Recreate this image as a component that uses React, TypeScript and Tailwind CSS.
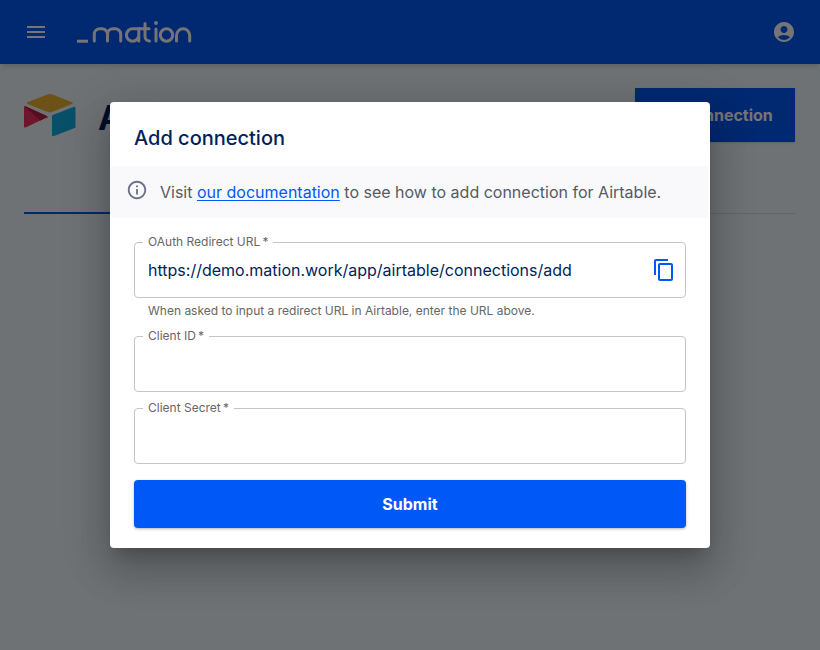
import { MdAccountCircle, MdMenu, MdOutlineContentCopy, MdOutlineInfo } from "react-icons/md";

const MationLogo = () => (
  <svg width="116" height="24" viewBox="0 0 116 24" fill="none" stroke="#fff" strokeWidth="3" strokeLinecap="round">
    <path d="M1 21.200h11" strokeLinecap="butt" />
    <path d="M18.300 21v-6.700a5.500 5.500 0 0 1 5.500-5.500h2.200a5.500 5.500 0 0 1 5.500 5.500V21M31.500 14.300a5.500 5.500 0 0 1 5.500-5.500h2.200a5.500 5.500 0 0 1 5.500 5.500V21" />
    <path d="M62.800 15a6.200 6.200 0 1 1-6.200-6.200h6.200V21" />
    <path d="M69 3.500v13a4.500 4.500 0 0 0 4.500 4.500M62.800 8.800H73" />
    <path d="M80 9v12" />
    <circle cx="80" cy="3" r="1.900" fill="#fff" stroke="none" />
    <circle cx="90.500" cy="15" r="6.200" />
    <path d="M100.500 21v-5.600a6.600 6.600 0 0 1 13.200 0V21" />
  </svg>
);

const AirtableLogo = () => (
  <svg width="52" height="44" viewBox="0 0 52 44">
    <path d="M23 2.500 3.500 10.300c-1 .4-1 1.300 0 1.700L23 19.800c1.800.7 3.800.7 5.500 0L48 12c1-.4 1-1.300 0-1.700L28.500 2.500c-1.800-.7-3.700-.7-5.500 0Z" fill="#eeb030" />
    <path d="M28 24.200v19c0 .8.800 1.300 1.500 1L50.700 36c.5-.2.800-.7.800-1.100V15.800c0-.8-.8-1.300-1.500-1L28.800 23.100c-.5.200-.8.600-.8 1.100Z" fill="#12aee6" />
    <path d="M23 25.200 1.600 35.500c-.7.400-1.600-.1-1.600-.9V15.200c0-.3.100-.6.400-.8.100-.100.300-.2.500-.2.200 0 .400 0 .600.100l21.300 9.600c.8.300.8 1.800.2 2.200Z" fill="#f0305f" />
    <path d="m23 25.200-6.600 3.300L.4 14.400c.1-.1.300-.2.500-.2.200 0 .4 0 .6.100l21.300 9.600c.8.300.8 1.800.2 2.300Z" fill="#ba1e45" />
  </svg>
);

function Field({ label, value }: { label: string; value?: string }) {
  return (
    <div className="relative h-14 rounded border border-[#c4c4c4]">
      <span className="absolute top-[-9px] left-2 bg-white px-[5px] text-xs leading-[15px] text-[#666] whitespace-nowrap">
        {label}
      </span>
      {value && (
        <div className="flex h-full items-center justify-between pl-[13px] pr-[9px]">
          <span className="text-base text-[#001f5c]">{value}</span>
          <MdOutlineContentCopy className="text-[#0059f7]" size={24} />
        </div>
      )}
    </div>
  );
}

export default function App() {
  return (
    <div className="relative h-[650px] w-[820px] overflow-hidden bg-[#f0f9ff] font-['Inter',sans-serif]">
      <header className="flex h-16 items-center justify-between bg-[#0059f7] px-6 shadow-md">
        <div className="flex items-center gap-7">
          <MdMenu className="text-white" size={24} />
          <MationLogo />
        </div>
        <MdAccountCircle className="text-white" size={24} />
      </header>

      <main className="px-6 pt-6">
        <div className="flex items-start justify-between pr-px">
          <div className="flex items-start gap-[22px] pt-1">
            <AirtableLogo />
            <h1 className="mt-1 text-[34px] font-bold leading-[44px] text-[#001f5c]">Airtable</h1>
          </div>
          <button className="h-[54px] w-40 bg-[#0059f7] pr-2 text-base font-bold text-white shadow-sm">
            Add connection
          </button>
        </div>
        <div className="mt-[70px] border-b border-[#d9dce3]">
          <div className="-mb-px h-0.5 w-[120px] bg-[#0059f7]" />
        </div>
      </main>

      <div className="absolute inset-0 flex items-center justify-center bg-[rgba(0,0,0,0.54)]">
        <div className="h-[446px] w-[600px] rounded bg-white shadow-[0_11px_15px_-7px_rgba(0,0,0,0.2),0_24px_38px_3px_rgba(0,0,0,0.14),0_9px_46px_8px_rgba(0,0,0,0.12)]">
          <h2 className="px-6 pt-[22px] text-xl font-medium leading-7 text-[#001f5c]">Add connection</h2>
          <div className="mt-[14px] mr-0.5 flex h-[52px] items-center gap-3 rounded bg-[#f9f9fb] pl-4">
            <MdOutlineInfo className="-mt-1 text-[#6b6f8a]" size={22} />
            <p className="text-base text-[#555a63]">
              Visit <a className="text-[#0059f7] underline decoration-1 underline-offset-2">our documentation</a> to see how to add connection for Airtable.
            </p>
          </div>
          <form className="flex flex-col px-6 pt-6">
            <Field label={"OAuth Redirect URL\u2009*"} value="https://demo.mation.work/app/airtable/connections/add" />
            <p className="mt-[5px] pl-[14px] text-xs leading-[15px] text-[#666]">
              When asked to input a redirect URL in Airtable, enter the URL above.
            </p>
            <div className="mt-[18px]">
              <Field label={"Client ID\u2009*"} />
            </div>
            <div className="mt-4">
              <Field label={"Client Secret\u2009*"} />
            </div>
            <button type="button" className="mt-4 h-12 rounded bg-[#0059f7] text-base font-bold text-white shadow-[0_1px_3px_rgba(0,0,0,0.3)]">
              Submit
            </button>
          </form>
        </div>
      </div>
    </div>
  );
}
